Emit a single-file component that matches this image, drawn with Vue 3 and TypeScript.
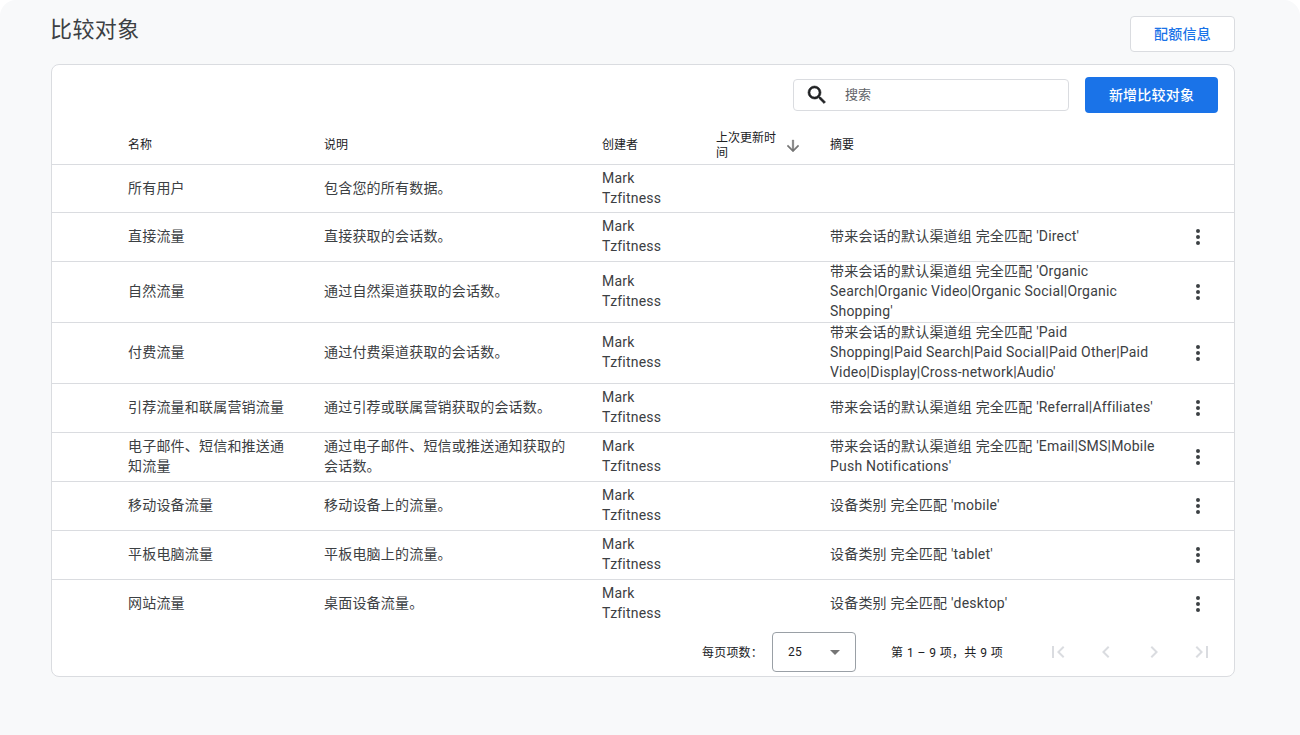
<script setup lang="ts">
interface Row { name: string; desc: string; summary: string; menu: boolean }
const prefix = '带来会话的默认渠道组 完全匹配 '
const rows: Row[] = [
  { name: '所有用户', desc: '包含您的所有数据。', summary: '', menu: false },
  { name: '直接流量', desc: '直接获取的会话数。', summary: prefix + "'Direct'", menu: true },
  { name: '自然流量', desc: '通过自然渠道获取的会话数。', summary: prefix + "'Organic Search|Organic Video|Organic Social|Organic Shopping'", menu: true },
  { name: '付费流量', desc: '通过付费渠道获取的会话数。', summary: prefix + "'Paid Shopping|Paid Search|Paid Social|Paid Other|Paid Video|Display|Cross-network|Audio'", menu: true },
  { name: '引荐流量和联属营销流量', desc: '通过引荐或联属营销获取的会话数。', summary: prefix + "'Referral|Affiliates'", menu: true },
  { name: '电子邮件、短信和推送通知流量', desc: '通过电子邮件、短信或推送通知获取的会话数。', summary: prefix + "'Email|SMS|Mobile Push Notifications'", menu: true },
  { name: '移动设备流量', desc: '移动设备上的流量。', summary: "设备类别 完全匹配 'mobile'", menu: true },
  { name: '平板电脑流量', desc: '平板电脑上的流量。', summary: "设备类别 完全匹配 'tablet'", menu: true },
  { name: '网站流量', desc: '桌面设备流量。', summary: "设备类别 完全匹配 'desktop'", menu: true },
]
</script>

<template>
  <div class="page">
    <header class="top">
      <h1 class="title">比较对象</h1>
      <button class="quota">配额信息</button>
    </header>
    <section class="card">
      <div class="toolbar">
        <label class="search">
          <svg class="search-icon" viewBox="0 0 24 24" width="24" height="24">
            <path fill="#202124" stroke="#202124" stroke-width="0.6" d="M15.5 14h-.79l-.28-.27A6.47 6.47 0 0 0 16 9.5 6.5 6.5 0 1 0 9.5 16c1.61 0 3.09-.59 4.23-1.57l.27.28v.79l5 4.99L20.49 19l-4.99-5zm-6 0C7.01 14 5 11.99 5 9.5S7.01 5 9.5 5 14 7.01 14 9.5 11.99 14 9.5 14z"/>
          </svg>
          <span class="placeholder">搜索</span>
        </label>
        <button class="add">新增比较对象</button>
      </div>
      <table class="table">
        <colgroup>
          <col class="c-name" /><col class="c-desc" /><col class="c-creator" /><col class="c-updated" /><col class="c-summary" /><col class="c-menu" />
        </colgroup>
        <thead>
          <tr>
            <th class="first">名称</th>
            <th>说明</th>
            <th>创建者</th>
            <th>
              <div class="sort">
                <span class="sort-label">上次更新时间</span>
                <svg viewBox="0 0 24 24" width="18" height="18"><path fill="#757575" stroke="#757575" stroke-width="0.5" d="M20 12l-1.41-1.41L13 16.17V4h-2v12.17l-5.58-5.59L4 12l8 8 8-8z"/></svg>
              </div>
            </th>
            <th>摘要</th>
            <th></th>
          </tr>
        </thead>
        <tbody>
          <tr v-for="r in rows" :key="r.name">
            <td class="first"><div class="cell">{{ r.name }}</div></td>
            <td><div class="cell">{{ r.desc }}</div></td>
            <td><div class="cell">Mark Tzfitness</div></td>
            <td></td>
            <td><div class="cell">{{ r.summary }}</div></td>
            <td class="menu-cell">
              <svg v-if="r.menu" viewBox="0 0 24 24" width="24" height="24"><path fill="#3c4043" d="M12 8a2 2 0 1 0 0-4 2 2 0 0 0 0 4zm0 2a2 2 0 1 0 0 4 2 2 0 0 0 0-4zm0 6a2 2 0 1 0 0 4 2 2 0 0 0 0-4z"/></svg>
            </td>
          </tr>
        </tbody>
      </table>
      <footer class="pager">
        <span class="per">每页项数&#xFF1A;</span>
        <div class="select">
          <span>25</span>
          <i class="caret"></i>
        </div>
        <span class="range">第 1 – 9 项&#xFF0C;共 9 项</span>
        <div class="nav">
          <svg viewBox="0 0 24 24" width="24" height="24"><path d="M18.41 16.59L13.82 12l4.59-4.59L17 6l-6 6 6 6zM6 6h2v12H6z"/></svg>
          <svg viewBox="0 0 24 24" width="24" height="24"><path d="M15.41 7.41L14 6l-6 6 6 6 1.41-1.41L10.83 12z"/></svg>
          <svg viewBox="0 0 24 24" width="24" height="24"><path d="M10 6L8.59 7.41 13.17 12l-4.58 4.59L10 18l6-6z"/></svg>
          <svg viewBox="0 0 24 24" width="24" height="24"><path d="M5.59 7.41L10.18 12l-4.59 4.59L7 18l6-6-6-6zM16 6h2v12h-2z"/></svg>
        </div>
      </footer>
    </section>
  </div>
</template>

<style>
html, body { margin: 0; background: #fff; }
</style>

<style scoped>
.page {
  box-sizing: border-box;
  height: 735px;
  padding: 16px 65px 0 51px;
  background: #f8f9fa;
  border-radius: 16px 16px 0 0;
  font-family: Roboto, "Noto Sans CJK SC", sans-serif;
  color: #3c4043;
  overflow: hidden;
}
.top { display: flex; justify-content: space-between; align-items: flex-start; height: 48px; }
.title { margin: 0 0 0 -1px; font-size: 22px; line-height: 28px; font-weight: 400; letter-spacing: 0.4px; color: #3c4043; }
.quota {
  box-sizing: border-box; width: 105px; height: 36px;
  border: 1px solid #dadce0; border-radius: 4px; background: #fff;
  color: #1a73e8; font: 500 14px/20px Roboto, "Noto Sans CJK SC", sans-serif; letter-spacing: 0.2px;
}
.card {
  box-sizing: border-box; height: 613px;
  background: #fff; border: 1px solid #dadce0; border-radius: 8px; overflow: hidden;
}
.toolbar { box-sizing: border-box; display: flex; justify-content: flex-end; align-items: flex-start; gap: 16px; padding: 12px 16px 0 0; height: 52px; }
.search {
  box-sizing: border-box; display: flex; align-items: center; width: 276px; height: 32px; margin-top: 2px;
  border: 1px solid #dadce0; border-radius: 4px; padding-left: 11px;
}
.search-icon { flex: none; }
.placeholder { margin-left: 16px; padding-bottom: 1px; font-size: 13px; line-height: 18px; color: #5f6368; }
.add {
  box-sizing: border-box; width: 133px; height: 36px; border: 0; border-radius: 4px;
  background: #1a73e8; color: #fff; font: 500 14px/20px Roboto, "Noto Sans CJK SC", sans-serif; letter-spacing: 0.2px;
}
.table { width: 100%; table-layout: fixed; border-collapse: separate; border-spacing: 0; font-size: 14px; line-height: 20px; letter-spacing: 0.2px; }
.c-name { width: 256px; } .c-desc { width: 278px; } .c-creator { width: 114px; } .c-updated { width: 114px; } .c-summary { width: 360px; }
th { box-sizing: border-box; height: 48px; padding: 10px 16px 0; text-align: left; font-size: 12px; line-height: 15px; font-weight: 400; letter-spacing: 0; color: #202124; border-bottom: 1px solid #dadce0; }
td { box-sizing: border-box; height: 49px; padding: 0 16px; border-bottom: 1px solid #dadce0; }
.cell { margin: -1px 0 1px; }
tbody tr:first-child td { height: 48px; }
.first { padding-left: 76px; }
.sort { display: flex; align-items: center; margin-right: -8px; }
.sort-label { width: 68px; }
.sort svg { flex: none; }
.menu-cell { padding: 0 12px 0 0; }
.menu-cell svg { display: block; margin: 0 auto; }
tbody tr:last-child td { border-bottom: 0; height: 48px; }
.pager { display: flex; align-items: center; justify-content: flex-end; height: 48px; padding-right: 20px; font-size: 12px; color: #202124; letter-spacing: 0.2px; }
.per { margin-right: -6px; padding-bottom: 2px; }
.select {
  box-sizing: border-box; display: flex; align-items: center; justify-content: space-between;
  width: 84px; height: 40px; margin-left: 15px; padding: 0 15px 0 15px;
  border: 1px solid #9aa0a6; border-radius: 4px;
}
.caret { width: 0; height: 0; border-left: 5px solid transparent; border-right: 5px solid transparent; border-top: 5px solid #757575; }
.range { margin-left: 35px; width: 155px; padding-bottom: 2px; word-spacing: 0.5px; }
.nav { display: flex; gap: 24px; }
.nav svg { fill: #dadce0; }
</style>
